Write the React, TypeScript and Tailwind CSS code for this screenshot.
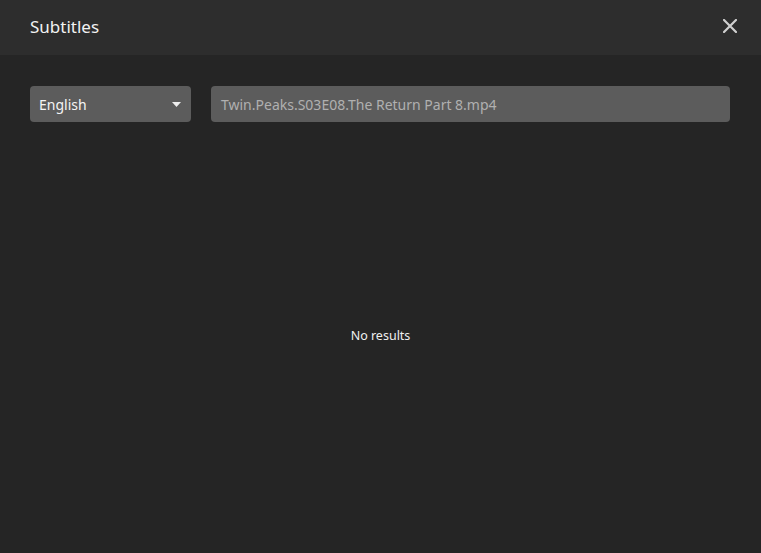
import React from "react";

export default function App() {
  return (
    <div
      className="w-[761px] h-[553px] bg-[#252525] flex flex-col overflow-hidden"
      style={{ fontFamily: '"Noto Sans", "Open Sans", sans-serif' }}
    >
      <div className="h-[55px] bg-[#2d2d2d] flex items-center justify-between pl-[30px] pr-[24px] shrink-0">
        <span className="text-[17px] text-[#f2f2f2] leading-none pb-[3px]">Subtitles</span>
        <svg width="14" height="14" viewBox="0 0 14 14" className="mb-[3px]">
          <path d="M1 1 L13 13 M13 1 L1 13" stroke="#cfcfcf" strokeWidth="2.2" strokeLinecap="square" />
        </svg>
      </div>
      <div className="flex gap-[20px] pl-[30px] pr-[31px] pt-[31px] shrink-0">
        <div className="w-[161px] h-[36px] bg-[#5c5c5c] rounded-[4px] flex items-center justify-between pl-[9px] pr-[10px]">
          <span className="text-[14px] text-[#f4f4f4]">English</span>
          <svg width="9" height="5" viewBox="0 0 9 5">
            <path d="M0 0 L9 0 L4.5 5 Z" fill="#eeeeee" />
          </svg>
        </div>
        <div className="flex-1 h-[36px] bg-[#5c5c5c] rounded-[4px] flex items-center pl-[10px]">
          <span className="text-[14px] text-[#b0b0b0]">Twin.Peaks.S03E08.The Return Part 8.mp4</span>
        </div>
      </div>
      <div className="flex-1 flex items-center justify-center pb-[2px]">
        <span className="text-[12.5px] text-[#f0f0f0]">No results</span>
      </div>
    </div>
  );
}
